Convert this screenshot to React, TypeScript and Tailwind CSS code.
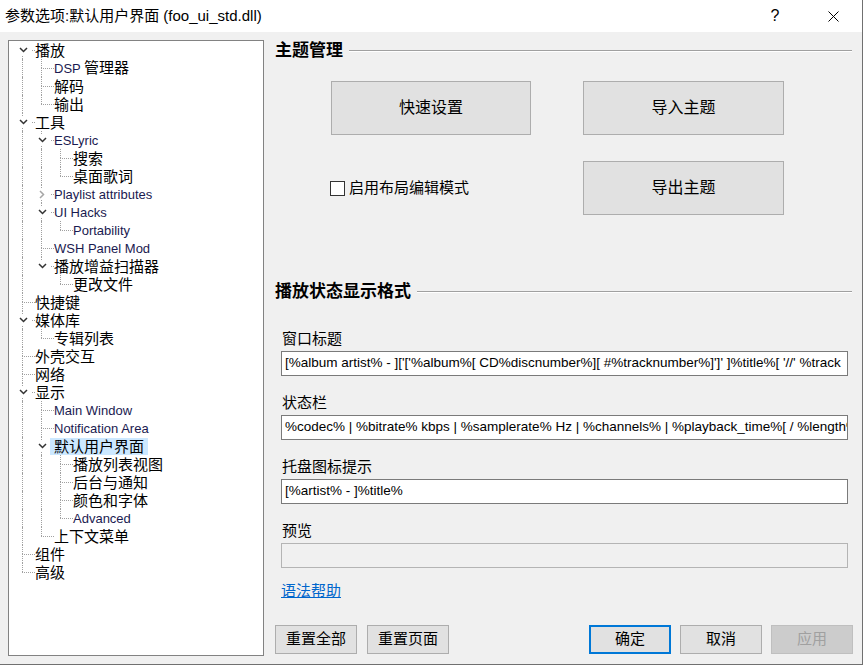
import React from "react";

type Node = {
  label: string;
  open?: boolean;
  closed?: boolean;
  selected?: boolean;
  children?: Node[];
};

type Row = {
  label: string;
  guides: boolean[];
  first: boolean;
  last: boolean;
  exp?: "open" | "closed";
  selected?: boolean;
};

const tree: Node[] = [
  { label: "播放", open: true, children: [{ label: "DSP 管理器" }, { label: "解码" }, { label: "输出" }] },
  {
    label: "工具",
    open: true,
    children: [
      { label: "ESLyric", open: true, children: [{ label: "搜索" }, { label: "桌面歌词" }] },
      { label: "Playlist attributes", closed: true },
      { label: "UI Hacks", open: true, children: [{ label: "Portability" }] },
      { label: "WSH Panel Mod" },
      { label: "播放增益扫描器", open: true, children: [{ label: "更改文件" }] },
    ],
  },
  { label: "快捷键" },
  { label: "媒体库", open: true, children: [{ label: "专辑列表" }] },
  { label: "外壳交互" },
  { label: "网络" },
  {
    label: "显示",
    open: true,
    children: [
      { label: "Main Window" },
      { label: "Notification Area" },
      {
        label: "默认用户界面",
        open: true,
        selected: true,
        children: [{ label: "播放列表视图" }, { label: "后台与通知" }, { label: "颜色和字体" }, { label: "Advanced" }],
      },
      { label: "上下文菜单" },
    ],
  },
  { label: "组件" },
  { label: "高级" },
];

function flatten(nodes: Node[], level: number, guides: boolean[], out: Row[]) {
  nodes.forEach((n, i) => {
    const last = i === nodes.length - 1;
    out.push({
      label: n.label,
      guides,
      first: level === 0 && i === 0,
      last,
      exp: n.open ? "open" : n.closed ? "closed" : undefined,
      selected: n.selected,
    });
    if (n.open && n.children) flatten(n.children, level + 1, [...guides, !last], out);
  });
  return out;
}

const rows = flatten(tree, 0, [], []);

// latin runs are drawn smaller, like the Tahoma text in the original
const Mixed = ({ text, latin }: { text: string; latin: string }) => (
  <>
    {text.split(/([\x00-\x7F]+)/).map((part, i) =>
      /^[\x00-\x7F]+$/.test(part) ? (
        <span key={i} className={latin}>
          {part}
        </span>
      ) : (
        part
      )
    )}
  </>
);

const dot = "border-dotted border-[#a0a0a0]";

const TreeRow = ({ row }: { row: Row }) => (
  <div className="flex h-[18px] items-center">
    {row.guides.map((g, i) => (
      <div key={i} className="relative h-full w-[19px] shrink-0">
        {g && <div className={`absolute left-[10px] top-0 h-full border-l ${dot}`} />}
      </div>
    ))}
    <div className="relative h-full w-[19px] shrink-0">
      {!row.first && <div className={`absolute left-[10px] top-0 h-[9px] border-l ${dot}`} />}
      {!row.last && <div className={`absolute left-[10px] top-[9px] h-[9px] border-l ${dot}`} />}
      <div className={`absolute left-[10px] top-[9px] w-[13px] border-t ${dot}`} />
      {row.exp && (
        <div className="absolute left-[3px] top-[4px] flex h-[10px] w-[16px] items-center justify-center bg-white">
          {row.exp === "open" ? (
            <svg width="9" height="6" viewBox="0 0 9 6">
              <path d="M1 1 L4.5 4.5 L8 1" fill="none" stroke="#333333" strokeWidth="1.5" />
            </svg>
          ) : (
            <svg width="6" height="9" viewBox="0 0 6 9">
              <path d="M1 1 L4.5 4.5 L1 8" fill="none" stroke="#a6a6a6" strokeWidth="1.5" />
            </svg>
          )}
        </div>
      )}
    </div>
    <span
      className={`relative whitespace-nowrap px-[4px] text-[15px] leading-[17px] text-black ${
        row.selected ? "bg-[#cce8ff]" : ""
      }`}
    >
      <Mixed text={row.label} latin="text-[13px] text-[#1a1a50]" />
    </span>
  </div>
);

const BigButton = ({ children }: { children: React.ReactNode }) => (
  <button className="flex h-[54px] items-center justify-center border border-[#adadad] bg-[#e1e1e1] text-[16px] text-black">
    {children}
  </button>
);

const Heading = ({ children }: { children: React.ReactNode }) => (
  <div className="flex h-[18px] items-center">
    <span className="text-[17px] font-bold leading-[18px] text-black">{children}</span>
    <div className="ml-[6px] mr-[1px] h-[2px] flex-1 border-t border-b border-t-[#a0a0a0] border-b-white" />
  </div>
);

const Field = ({ label, value, disabled }: { label: string; value?: string; disabled?: boolean }) => (
  <div>
    <div className="ml-[7px] h-[20px] text-[15px] leading-[20px] text-black">{label}</div>
    <div
      className={`ml-[6px] mr-[5px] mt-[2px] flex h-[25px] items-center overflow-hidden whitespace-pre px-[3px] text-[13.5px] text-black ${
        disabled ? "border border-[#b4b4b4] bg-[#f0f0f0]" : "border border-[#7a7a7a] bg-white"
      }`}
    >
      {value}
    </div>
  </div>
);

const Btn = ({ children, kind }: { children: React.ReactNode; kind?: "default" | "disabled" }) => (
  <button
    className={`flex h-[29px] w-[82px] items-center justify-center text-[15px] ${
      kind === "default"
        ? "border-2 border-[#0078d7] bg-[#e1e1e1] text-black"
        : kind === "disabled"
        ? "border border-[#bfbfbf] bg-[#cccccc] text-[#a0a0a0]"
        : "border border-[#adadad] bg-[#e1e1e1] text-black"
    }`}
  >
    {children}
  </button>
);

export default function App() {
  return (
    <div className="h-[665px] w-[863px] overflow-hidden border-r border-b border-[#707070] bg-[#f0f0f0] font-['Liberation_Sans','Noto_Sans_CJK_SC',sans-serif]">
      <div className="flex h-[32px] items-center bg-white">
        <span className="pl-[5px] text-[15px] text-black">参数选项:默认用户界面 (foo_ui_std.dll)</span>
        <div className="ml-auto flex h-full">
          <div className="flex w-[58px] items-center justify-center text-[16px] text-black">?</div>
          <div className="flex w-[58px] items-center justify-center">
            <svg width="11" height="11" viewBox="0 0 11 11">
              <path d="M0.5 0.5 L10.5 10.5 M10.5 0.5 L0.5 10.5" stroke="#000" strokeWidth="1" />
            </svg>
          </div>
        </div>
      </div>

      <div className="flex px-[8px] pt-[8px]">
        <div className="h-[616px] w-[256px] shrink-0 overflow-hidden border border-[#828282] bg-white pl-[3px]">
          {rows.map((r, i) => (
            <TreeRow key={i} row={r} />
          ))}
        </div>

        <div className="ml-[11px] w-[578px]">
          <div className="mt-[2px]">
            <Heading>主题管理</Heading>
          </div>

          <div className="ml-[56px] mt-[21px] grid grid-cols-[200px_201px] gap-x-[52px] gap-y-[26px]">
            <BigButton>快速设置</BigButton>
            <BigButton>导入主题</BigButton>
            <label className="-ml-[1px] mt-[16px] flex items-center gap-[4px] self-start text-[15px] text-black">
              <span className="h-[15px] w-[15px] border border-[#333333] bg-white" />
              启用布局编辑模式
            </label>
            <BigButton>导出主题</BigButton>
          </div>

          <div className="mt-[68px]">
            <Heading>播放状态显示格式</Heading>
          </div>

          <div className="mt-[28px] flex flex-col gap-[17px]">
            <Field
              label="窗口标题"
              value="[%album artist% - ]['['%album%[ CD%discnumber%][ #%tracknumber%]']' ]%title%[ '//' %track"
            />
            <Field label="状态栏" value="%codec% | %bitrate% kbps | %samplerate% Hz | %channels% | %playback_time%[ / %length%" />
            <Field label="托盘图标提示" value="[%artist% - ]%title%" />
            <Field label="预览" disabled />
          </div>

          <div className="ml-[6px] mt-[13px] h-[20px] text-[15px] leading-[20px]">
            <a className="text-[#0066cc] underline">语法帮助</a>
          </div>

          <div className="mt-[24px] flex gap-[10px]">
            <Btn>重置全部</Btn>
            <Btn>重置页面</Btn>
            <div className="ml-auto flex gap-[9px]">
              <Btn kind="default">确定</Btn>
              <Btn>取消</Btn>
              <Btn kind="disabled">应用</Btn>
            </div>
          </div>
        </div>
      </div>
    </div>
  );
}
